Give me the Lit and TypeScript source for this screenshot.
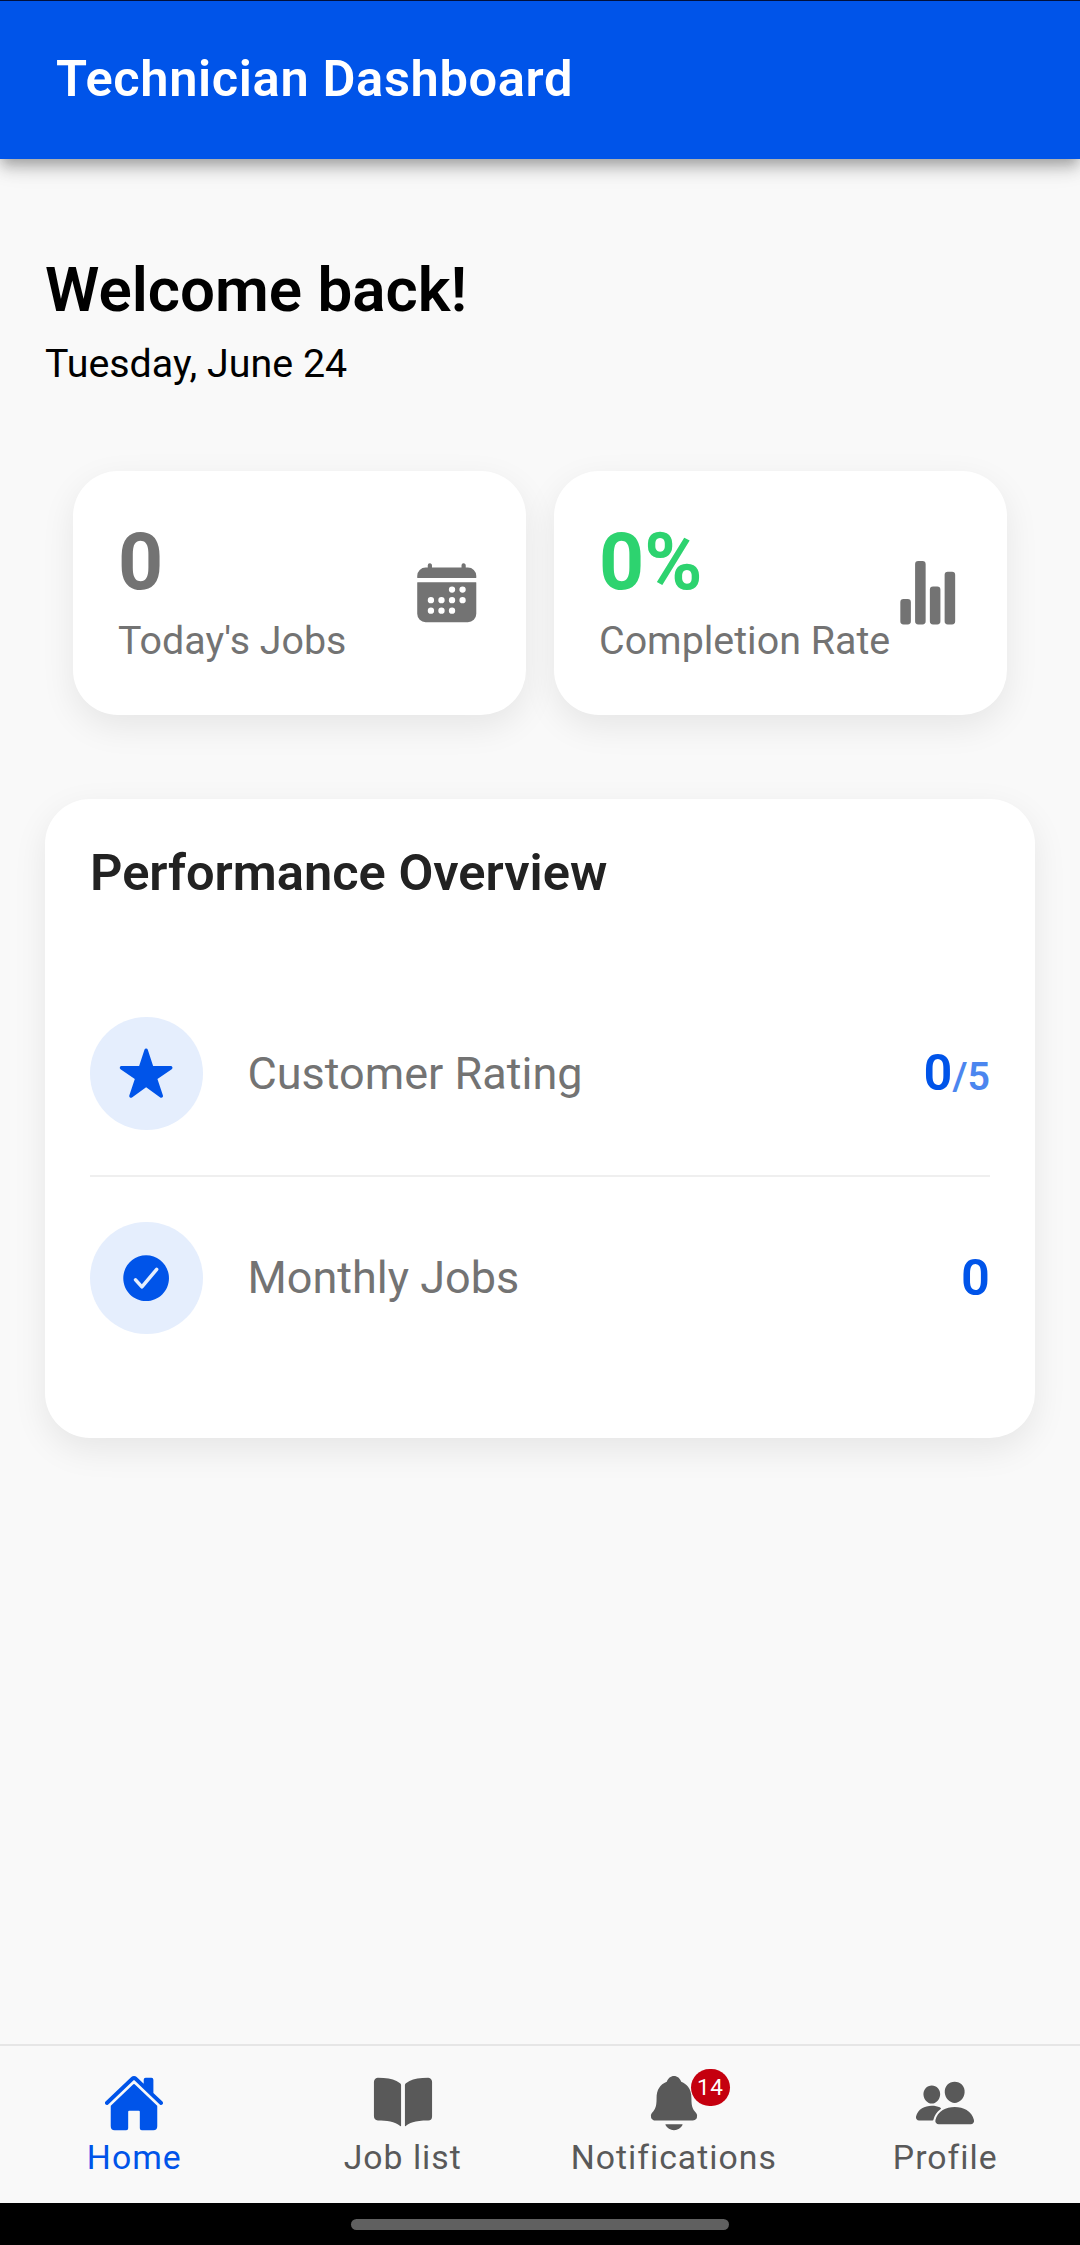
import { LitElement, html, css, svg } from "lit";
import { customElement, property } from "lit/decorators.js";

const icons: Record<string, string[]> = {
  calendar: [
    "M480 128a64 64 0 00-64-64h-16V48.45c0-8.61-6.62-16-15.23-16.43A16 16 0 00368 48v16H144V48.45c0-8.61-6.62-16-15.23-16.43A16 16 0 00112 48v16H96a64 64 0 00-64 64v12a4 4 0 004 4h440a4 4 0 004-4zM32 416a64 64 0 0064 64h320a64 64 0 0064-64V179a3 3 0 00-3-3H35a3 3 0 00-3 3zm344-208a24 24 0 11-24 24 24 24 0 0124-24zm0 80a24 24 0 11-24 24 24 24 0 0124-24zm-80-80a24 24 0 11-24 24 24 24 0 0124-24zm0 80a24 24 0 11-24 24 24 24 0 0124-24zm0 80a24 24 0 11-24 24 24 24 0 0124-24zm-80-80a24 24 0 11-24 24 24 24 0 0124-24zm0 80a24 24 0 11-24 24 24 24 0 0124-24zm-80-80a24 24 0 11-24 24 24 24 0 0124-24zm0 80a24 24 0 11-24 24 24 24 0 0124-24z",
  ],
  stats: [
    "M104 496H72a24 24 0 01-24-24V328a24 24 0 0124-24h32a24 24 0 0124 24v144a24 24 0 01-24 24zM328 496h-32a24 24 0 01-24-24V232a24 24 0 0124-24h32a24 24 0 0124 24v240a24 24 0 01-24 24zM440 496h-32a24 24 0 01-24-24V120a24 24 0 0124-24h32a24 24 0 0124 24v352a24 24 0 01-24 24zM216 496h-32a24 24 0 01-24-24V40a24 24 0 0124-24h32a24 24 0 0124 24v432a24 24 0 01-24 24z",
  ],
  star: [
    "M394 480a16 16 0 01-9.39-3L256 383.76 127.39 477a16 16 0 01-24.55-18.08L153 310.35 23 221.2a16 16 0 019-29.2h160.38l48.4-148.95a16 16 0 0130.44 0l48.4 149H480a16 16 0 019.05 29.2L359 310.35l50.13 148.53A16 16 0 01394 480z",
  ],
  check: [
    "M256 48C141.31 48 48 141.31 48 256s93.31 208 208 208 208-93.31 208-208S370.69 48 256 48zm108.25 138.29l-134.4 160a16 16 0 01-12 5.71h-.27a16 16 0 01-11.89-5.3l-57.6-64a16 16 0 1123.78-21.4l45.29 50.32 122.59-145.91a16 16 0 0124.5 20.58z",
  ],
  home: [
    "M261.56 101.28a8 8 0 00-11.06 0L66.4 277.15a8 8 0 00-2.47 5.79L63.9 448a32 32 0 0032 32H192a16 16 0 0016-16V328a8 8 0 018-8h80a8 8 0 018 8v136a16 16 0 0016 16h96.06a32 32 0 0032-32V282.94a8 8 0 00-2.47-5.79z",
    "M490.91 244.15l-74.8-71.56V64a16 16 0 00-16-16h-48a16 16 0 00-16 16v32l-57.92-55.38C272.77 35.14 264.71 32 256 32c-8.68 0-16.72 3.14-22.14 8.63l-212.7 203.5c-6.22 6-7 15.87-1.34 22.37A16 16 0 0043 267.56L250.5 69.28a8 8 0 0111.06 0l207.52 198.28a16 16 0 0022.59-.44c6.14-6.36 5.63-16.86-.76-22.97z",
  ],
  book: [
    "M202.24 74C166.11 56.75 115.61 48.3 48 48a31.36 31.36 0 00-17.92 5.33A32 32 0 0016 79.9V366c0 19.34 13.76 33.93 32 33.93 71.07 0 142.36 6.64 185.06 47a4.11 4.11 0 006.94-3V106.82a15.89 15.89 0 00-5.46-12A143 143 0 00202.24 74zM481.92 53.3A31.33 31.33 0 00464 48c-67.61.3-118.11 8.71-154.24 26a143.31 143.31 0 00-32.31 20.78 15.93 15.93 0 00-5.45 12v337.13a3.93 3.93 0 006.68 2.81c25.67-25.5 70.72-46.82 185.36-46.81a32 32 0 0032-32v-288a32 32 0 00-14.12-26.61z",
  ],
  bell: [
    "M440.08 341.31c-1.66-2-3.29-4-4.89-5.93-22-26.61-35.31-42.67-35.31-118 0-39-9.33-71-27.72-95-13.56-17.73-31.89-31.18-56.05-41.12a3 3 0 01-.82-.67C306.6 51.49 282.82 32 256 32s-50.59 19.49-59.28 48.56a3.13 3.13 0 01-.81.65c-56.38 23.21-83.78 67.74-83.78 136.14 0 75.36-13.29 91.42-35.31 118-1.6 1.93-3.23 3.89-4.89 5.93a35.16 35.16 0 00-4.65 37.62c6.17 13 19.32 21.07 34.33 21.07H410.5c14.94 0 28-8.06 34.19-21a35.17 35.17 0 00-4.61-37.66zM256 480a80.06 80.06 0 0070.44-42.13 4 4 0 00-3.54-5.87H189.12a4 4 0 00-3.55 5.87A80.06 80.06 0 00256 480z",
  ],
  people: [
    "M336 256c-20.56 0-40.44-9.18-56-25.84-15.13-16.25-24.37-37.92-26-61-1.74-24.62 5.77-47.26 21.14-63.76S312 80 336 80c23.83 0 45.38 9.06 60.7 25.52 15.47 16.62 23 39.22 21.26 63.63-1.67 23.11-10.9 44.77-26 61C376.44 246.82 356.57 256 336 256zM467.83 432H204.18a27.71 27.71 0 01-22-10.67 30.22 30.22 0 01-5.26-25.79c8.42-33.81 29.28-61.85 60.32-81.08C264.79 297.4 299.86 288 336 288c36.85 0 71 9 98.71 26.05 31.11 19.13 52 47.33 60.38 81.55a30.27 30.27 0 01-5.32 25.78A27.68 27.68 0 01467.83 432zM147 260c-35.19 0-66.13-32.72-69-72.93-1.42-20.6 5-39.65 18-53.62 12.86-13.83 31-21.45 51-21.45s38 7.66 50.93 21.57c13.1 14.08 19.5 33.09 18 53.52-2.87 40.2-33.8 72.91-68.93 72.91zM212.66 291.45c-17.59-8.6-40.42-12.9-65.65-12.9-29.46 0-58.07 7.68-80.57 21.62-25.51 15.83-42.67 38.88-49.6 66.71a27.39 27.39 0 004.79 23.36A25.32 25.32 0 0041.72 400h111a8 8 0 007.87-6.57c.11-.63.25-1.26.41-1.88 8.48-34.06 28.35-62.84 57.71-83.82a8 8 0 00-.63-13.39c-1.57-.92-3.37-1.89-5.42-2.89z",
  ],
};

@customElement("app-icon")
class AppIcon extends LitElement {
  @property() name = "home";

  static styles = css`
    :host {
      display: block;
      flex: none;
    }
    svg {
      display: block;
      width: 100%;
      height: 100%;
      fill: currentColor;
    }
  `;

  render() {
    return html`<svg viewBox="0 0 512 512" aria-hidden="true">
      ${icons[this.name].map((d) => svg`<path d=${d}></path>`)}
    </svg>`;
  }
}

@customElement("app-root")
class AppRoot extends LitElement {
  static styles = css`
    :host {
      display: flex;
      flex-direction: column;
      height: 2245px;
      overflow: hidden;
      background: #f9f9f9;
      color: #000;
      font-family: Roboto, "Liberation Sans", sans-serif;
    }
    * {
      box-sizing: border-box;
    }
    h1,
    h2,
    h3,
    p {
      margin: 0;
    }
    .bar {
      flex: none;
      height: 159px;
      border-top: 1px solid #00103c;
      padding: 0 56px;
      display: flex;
      align-items: center;
      background: #0054e9;
      color: #fff;
      box-shadow: 0 5.6px 11.25px -2.8px rgba(0, 0, 0, 0.2),
        0 11.25px 14px 0 rgba(0, 0, 0, 0.14), 0 2.8px 28px 0 rgba(0, 0, 0, 0.12);
    }
    .bar-title {
      font-size: 50.6px;
      line-height: 60px;
      font-weight: 600;
      letter-spacing: 0.63px;
      padding-bottom: 2px;
    }
    .content {
      flex: 1;
      min-height: 0;
      padding: 95px 45px 0;
    }
    .welcome {
      font-size: 61.9px;
      line-height: 72px;
      font-weight: 600;
    }
    .date {
      margin-top: 14px;
      font-size: 39.4px;
      line-height: 48px;
    }
    .stats {
      display: grid;
      grid-template-columns: 1fr 1fr;
      gap: 28px;
      padding: 0 28px;
      margin-top: 83px;
    }
    .card {
      background: #fff;
      border-radius: 45px;
      box-shadow: 0 11.25px 33.75px rgba(0, 0, 0, 0.08);
    }
    .stat {
      height: 244px;
      padding: 45px 46px 45px 45px;
      display: flex;
      align-items: center;
      justify-content: space-between;
    }
    .stat-value {
      font-size: 78.75px;
      line-height: 91px;
      font-weight: 700;
      color: #737373;
    }
    .stat-value.success {
      color: #2dd36f;
    }
    .stat-label {
      margin-top: 4px;
      font-size: 39.4px;
      line-height: 58px;
      color: #737373;
      white-space: nowrap;
    }
    .stat-icon {
      width: 67.5px;
      height: 67.5px;
      color: #737373;
    }
    .overview {
      margin-top: 84px;
      padding: 45px 45px 59px;
    }
    .overview-title {
      font-size: 50.6px;
      line-height: 57px;
      font-weight: 600;
      color: #222;
      margin-bottom: 71px;
    }
    .metric {
      display: flex;
      align-items: center;
      gap: 45px;
      padding: 45px 0;
    }
    .metric + .metric {
      border-top: 2px solid #efefef;
    }
    .disc {
      width: 112.5px;
      height: 112.5px;
      border-radius: 50%;
      background: #e5eefd;
      color: #0054e9;
      display: grid;
      place-items: center;
    }
    .disc-icon {
      width: 56.25px;
      height: 56.25px;
    }
    .metric-label {
      flex: 1;
      font-size: 45px;
      line-height: 56px;
      color: #737373;
    }
    .metric-value {
      font-size: 50.6px;
      line-height: 56px;
      font-weight: 600;
      color: #0054e9;
    }
    .rating .metric-label {
      padding-top: 2px;
    }
    .rating .metric-value {
      padding-top: 3px;
    }
    .unit {
      font-size: 39.4px;
      opacity: 0.7;
    }
    .tabs {
      flex: none;
      height: 159px;
      border-top: 2px solid #e6e6e6;
      display: grid;
      grid-template-columns: 268.5px 268.5px 273.5px 269.5px;
      color: #595959;
    }
    .tab {
      display: flex;
      flex-direction: column;
      align-items: center;
      padding-top: 26px;
    }
    .tab.active {
      color: #0054e9;
    }
    .tab-icon-wrap {
      position: relative;
    }
    .tab-icon {
      width: 62px;
      height: 62px;
    }
    .tab-label {
      margin-top: 4px;
      font-size: 33.75px;
      line-height: 40px;
      letter-spacing: 1.01px;
    }
    .badge {
      position: absolute;
      left: 48px;
      top: -3px;
      width: 39px;
      height: 37px;
      border-radius: 19px;
      background: #c5000f;
      color: #fff;
      font-size: 22.5px;
      line-height: 37px;
      letter-spacing: 0.67px;
      text-align: center;
    }
    .system {
      flex: none;
      height: 42px;
      background: #000;
      display: flex;
      justify-content: center;
      padding-top: 16px;
    }
    .handle {
      width: 378px;
      height: 11px;
      border-radius: 6px;
      background: #606060;
    }
  `;

  private tabs = [
    { icon: "home", label: "Home", active: true, badge: 0 },
    { icon: "book", label: "Job list", active: false, badge: 0 },
    { icon: "bell", label: "Notifications", active: false, badge: 14 },
    { icon: "people", label: "Profile", active: false, badge: 0 },
  ];

  render() {
    return html`
      <header class="bar"><h1 class="bar-title">Technician Dashboard</h1></header>
      <main class="content">
        <h2 class="welcome">Welcome back!</h2>
        <p class="date">Tuesday, June 24</p>
        <section class="stats">
          <div class="card stat">
            <div>
              <div class="stat-value">0</div>
              <div class="stat-label">Today's Jobs</div>
            </div>
            <app-icon class="stat-icon" name="calendar"></app-icon>
          </div>
          <div class="card stat">
            <div>
              <div class="stat-value success">0%</div>
              <div class="stat-label">Completion Rate</div>
            </div>
            <app-icon class="stat-icon" name="stats"></app-icon>
          </div>
        </section>
        <section class="card overview">
          <h3 class="overview-title">Performance Overview</h3>
          <div class="metric rating">
            <div class="disc"><app-icon class="disc-icon" name="star"></app-icon></div>
            <div class="metric-label">Customer Rating</div>
            <div class="metric-value">0<span class="unit">/5</span></div>
          </div>
          <div class="metric">
            <div class="disc"><app-icon class="disc-icon" name="check"></app-icon></div>
            <div class="metric-label">Monthly Jobs</div>
            <div class="metric-value">0</div>
          </div>
        </section>
      </main>
      <nav class="tabs">
        ${this.tabs.map(
          (t) => html`<div class="tab ${t.active ? "active" : ""}">
            <div class="tab-icon-wrap">
              <app-icon class="tab-icon" name=${t.icon}></app-icon>
              ${t.badge ? html`<span class="badge">${t.badge}</span>` : ""}
            </div>
            <div class="tab-label">${t.label}</div>
          </div>`
        )}
      </nav>
      <div class="system"><div class="handle"></div></div>
    `;
  }
}
